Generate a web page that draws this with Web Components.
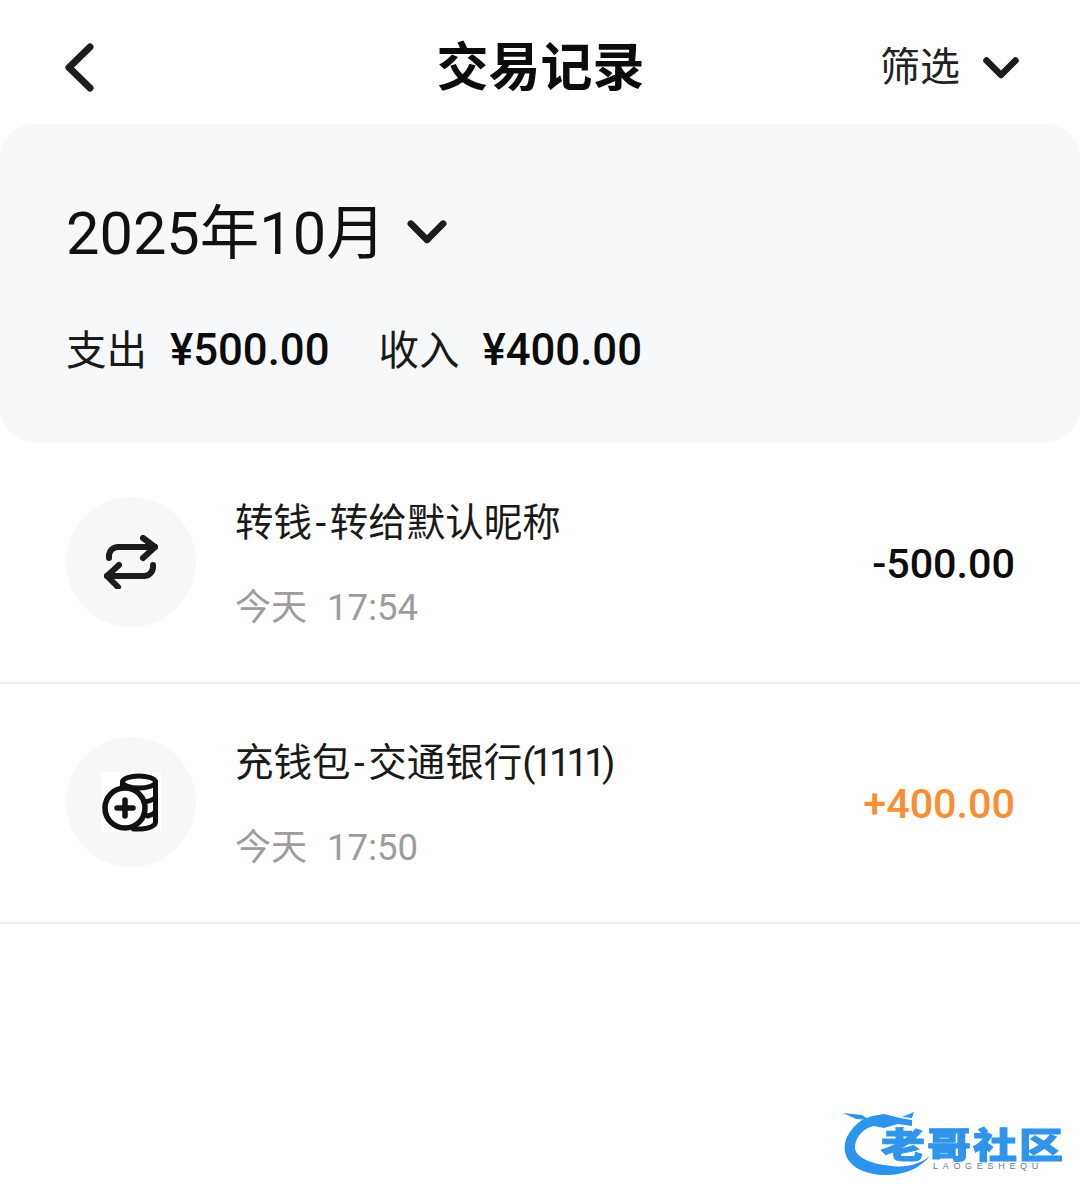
<!DOCTYPE html>
<html lang="zh">
<head>
<meta charset="utf-8">
<title>交易记录</title>
<style>
  html, body { margin: 0; background: #fff; }
  body {
    width: 1080px;
    height: 1204px;
    overflow: hidden;
    font-family: Roboto, "Noto Sans CJK SC", sans-serif;
    color: #111;
  }
  .hy { margin: 0 3.5px; }
  .num { letter-spacing: -4px; }
</style>
</head>
<body>
<nav-bar title="交易记录" action="筛选"></nav-bar>
<month-summary month="2025年10月" out="¥500.00" in="¥400.00"></month-summary>
<record-row icon="transfer" time="今天" clock="17:54" amount="-500.00">转钱<span class="hy">-</span>转给默认昵称</record-row>
<record-row icon="coins" time="今天" clock="17:50" amount="+400.00" income>充钱包<span class="hy">-</span>交通银行<span class="num">(1111)</span></record-row>
<site-mark></site-mark>

<script>
const chevron = (w, h, sw) => `<svg width="${w}" height="${h}" viewBox="0 0 36 22" fill="none" stroke="#1b1c1e" stroke-width="${sw}" stroke-linecap="round" stroke-linejoin="round"><path d="M3.5 3.5 18 18 32.5 3.5"/></svg>`

/**
 * Top bar with back arrow, title and filter.
 */
customElements.define('nav-bar', class extends HTMLElement {
  constructor () {
    super()
    this.attachShadow({ mode: 'open' }).innerHTML = `
      <style>
        :host { display: block; }
        .bar {
          height: 124px;
          display: grid;
          grid-template-columns: 1fr auto 1fr;
          align-items: center;
          padding: 0 61px 0 64px;
        }
        .title { font-size: 52px; font-weight: 700; line-height: 1; color: #0c0c0c; padding: 13px 2px 0 0; }
        .back { display: flex; padding-top: 12px; }
        .filter {
          justify-self: end;
          display: flex;
          align-items: center;
          gap: 23px;
          font-size: 40px;
          color: #222;
          padding-top: 4px;
        }
        .filter svg { margin-top: 8px; }
      </style>
      <div class="bar">
        <div class="back">
          <svg width="32" height="50" viewBox="0 0 32 50" fill="none" stroke="#1b1c1e" stroke-width="7" stroke-linecap="round" stroke-linejoin="round"><path d="M26 4 5 24.5 26 45"/></svg>
        </div>
        <div class="title">${this.getAttribute('title')}</div>
        <div class="filter"><span>${this.getAttribute('action')}</span>${chevron(36, 22, 6.5)}</div>
      </div>`
  }
})

/**
 * Grey card with the month picker and the totals.
 */
customElements.define('month-summary', class extends HTMLElement {
  constructor () {
    super()
    this.attachShadow({ mode: 'open' }).innerHTML = `
      <style>
        :host { display: block; }
        .card {
          height: 318px;
          box-sizing: border-box;
          background: #f7f8fa;
          border-radius: 34px;
          padding: 74px 66px 0;
        }
        .month { display: flex; align-items: center; gap: 21px; font-size: 59.5px; line-height: 72px; color: #111; }
        .month svg { margin-top: -4px; }
        .totals { display: flex; margin-top: 54px; font-size: 40.5px; line-height: 52px; color: #1a1a1a; }
        .totals b { font-weight: 500; margin-left: 23px; font-size: 43.7px; color: #0c0c0c; }
        .totals span + span { margin-left: 49px; }
      </style>
      <div class="card">
        <div class="month"><span>${this.getAttribute('month')}</span>${chevron(40, 26, 6)}</div>
        <div class="totals">
          <span>支出<b>${this.getAttribute('out')}</b></span>
          <span>收入<b>${this.getAttribute('in')}</b></span>
        </div>
      </div>`
  }
})

const icons = {
  transfer: `<svg width="54" height="54" viewBox="0 0 54 54" fill="none" stroke="#1b1c1e" stroke-width="6" stroke-linecap="round" stroke-linejoin="round">
    <path d="M5 23v-2a9 9 0 0 1 9-9h37"/><path d="M39 3 51 12 39 23"/>
    <path d="M49 30v2a9 9 0 0 1-9 9H3"/><path d="M15 30 3 41 14 52"/></svg>`,
  coins: `<svg width="60" height="60" viewBox="0 0 60 60" fill="none" stroke="#111" stroke-width="5" stroke-linecap="round">
    <rect width="60" height="60" fill="#fff" stroke="none"/>
    <ellipse cx="38" cy="10" rx="16.500" ry="6"/>
    <path d="M21.500 10v8M54.500 10v40c0 4-6 6-14 7h-8M54.500 24c0 3-5 5-11 6M54.500 38c0 3-4 5-8 6"/>
    <circle cx="24" cy="36" r="20" fill="#fff" stroke-width="5.500"/>
    <path d="M24 28v16M16 36h16" stroke-width="5.500"/></svg>`
}

/**
 * One line in the list of transactions. The name comes in through the slot.
 */
customElements.define('record-row', class extends HTMLElement {
  constructor () {
    super()
    const colour = this.hasAttribute('income') ? '#fb8d33' : '#0c0c0c'
    this.attachShadow({ mode: 'open' }).innerHTML = `
      <style>
        :host { display: block; }
        .row {
          height: 240px;
          box-sizing: border-box;
          box-shadow: 0 2px 0 #f0f1f2;
          display: flex;
          align-items: center;
          padding: 0 65px 0 66px;
        }
        .icon {
          width: 130px;
          height: 130px;
          border-radius: 50%;
          background: #f7f8fa;
          display: flex;
          align-items: center;
          justify-content: center;
          flex: none;
        }
        .text { flex: 1; margin-left: 39px; padding-top: 7px; display: flex; flex-direction: column; gap: 33px; }
        .name { font-size: 38.5px; line-height: 52px; color: #1a1a1a; }
        .time { font-size: 36.600px; line-height: 52px; color: #9c9c9c; display: flex; gap: 20px; }
        .time span:first-child { font-size: 36px; }
        .amount { font-size: 41.300px; font-weight: 500; color: ${colour}; padding-top: 3px; }
      </style>
      <div class="row">
        <div class="icon">${icons[this.getAttribute('icon')]}</div>
        <div class="text">
          <div class="name"><slot></slot></div>
          <div class="time"><span>${this.getAttribute('time')}</span><span>${this.getAttribute('clock')}</span></div>
        </div>
        <div class="amount">${this.getAttribute('amount')}</div>
      </div>`
  }
})

/**
 * Watermark in the lower right corner.
 */
customElements.define('site-mark', class extends HTMLElement {
  constructor () {
    super()
    this.attachShadow({ mode: 'open' }).innerHTML = `
      <style>
        :host { position: absolute; left: 840px; top: 1106px; width: 230px; height: 72px; display: block; }
        svg { position: absolute; left: 0; top: 0; filter: blur(.5px); }
        .name {
          position: absolute;
          left: 41px;
          top: 26px;
          font-size: 44px;
          line-height: 36px;
          font-weight: 900;
          letter-spacing: 2px;
          white-space: nowrap;
          transform: scaleY(.8);
          transform-origin: left top;
          color: #2f94ea;
          -webkit-text-stroke: 1.2px #2f94ea;
          filter: blur(.5px);
        }
        .sub {
          position: absolute;
          left: 93px;
          top: 55px;
          font-family: "Liberation Sans", sans-serif;
          font-size: 9px;
          line-height: 10px;
          letter-spacing: 4.7px;
          color: #5b7fa8;
        }
      </style>
      <svg width="100" height="72" viewBox="0 0 100 72">
        <path fill="#2d94ec" d="M22 14C8 24 3 36 5 46c3 16 23 24 45 23 18-1 32-9 40-19-10 8-24 12-38 10C32 58 14 52 15 40c1-10 9-18 19-20l10 2 14-4 14 2v-6L60 12 44 8 32 10z"/>
        <path fill="#2d94ec" d="M3 7l19 2 8 5-14-1zM62 11l12-5-2 6z"/>
      </svg>
      <div class="name">老哥社区</div>
      <div class="sub">LAOGESHEQU</div>`
  }
})
</script>
</body>
</html>
